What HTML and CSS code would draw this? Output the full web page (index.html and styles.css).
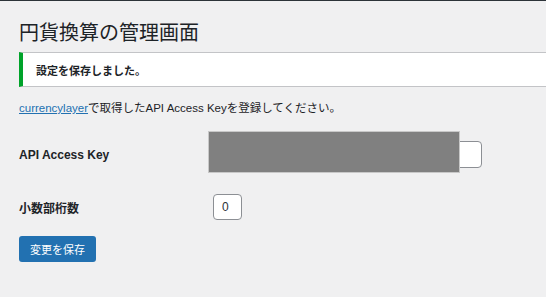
FILE: index.html
```html
<!DOCTYPE html>
<html lang="ja">
<head>
<meta charset="utf-8">
<link rel="stylesheet" href="styles.css">
</head>
<body>
<div class="topbar"></div>
<div class="wrap">
  <h1 class="title">円貨換算の管理画面</h1>
  <div class="notice"><p>設定を保存しました。</p></div>
  <p class="intro"><a href="#">currencylayer</a>で取得したAPI Access Keyを登録してください。</p>
  <form class="form">
    <div class="row row-key">
      <label class="label">API Access Key</label>
      <div class="field">
        <input class="input input-key" type="text" value="">
        <div class="redact"></div>
      </div>
    </div>
    <div class="row row-dec">
      <label class="label">小数部桁数</label>
      <div class="field">
        <input class="input input-num" type="text" value="0">
      </div>
    </div>
    <button class="btn" type="button">変更を保存</button>
  </form>
</div>
</body>
</html>
```

FILE: styles.css
```css
html, body {
  margin: 0;
  padding: 0;
  background: #f0f0f1;
  font-family: "Liberation Sans", "Noto Sans CJK JP", sans-serif;
  color: #1d2327;
}
.topbar {
  height: 1px;
  background: #2c3338;
}
.wrap {
  padding-left: 19px;
}
.title {
  margin: 17px 0 0;
  font-family: "Noto Sans CJK JP", sans-serif;
  font-weight: 400;
  font-size: 20px;
  line-height: 28px;
  color: #1d2327;
}
.notice {
  margin-top: 6px;
  height: 33px;
  background: #fff;
  border-top: 1px solid #c3c4c7;
  border-bottom: 1px solid #c3c4c7;
  border-left: 4px solid #00a32a;
  display: flex;
  align-items: center;
  padding-left: 13px;
}
.notice p {
  margin: 0;
  font-family: "Noto Sans CJK JP", sans-serif;
  font-size: 11px;
  font-weight: 700;
}
.intro {
  margin: 13px 0 0;
  font-size: 11.5px;
  line-height: 16px;
}
.intro a {
  color: #2271b1;
  text-decoration: underline;
}
.row {
  display: grid;
  grid-template-columns: 194px auto;
  align-items: center;
}
.row-key {
  margin-top: 25px;
}
.row-dec {
  margin-top: 26px;
}
.label {
  font-size: 12px;
  font-weight: 700;
}
.field {
  position: relative;
}
.input {
  box-sizing: border-box;
  border: 1px solid #8c8f94;
  border-radius: 4px;
  background: #fff;
  font-family: "Liberation Sans", sans-serif;
  font-size: 12px;
  color: #2c3338;
  padding: 0 8px;
  outline: none;
  display: block;
}
.input-key {
  width: 273px;
  height: 27px;
  margin-left: -4px;
}
.input-num {
  width: 29px;
  height: 26px;
}
.redact {
  position: absolute;
  left: -4px;
  top: -9px;
  width: 250px;
  height: 40px;
  background: #808080;
  box-shadow: 0 0 0 1px #c8c8c8;
}
.btn {
  margin-top: 16px;
  display: block;
  width: 77px;
  height: 26px;
  background: #2271b1;
  color: #fff;
  border: none;
  border-radius: 3px;
  font-family: "Noto Sans CJK JP", sans-serif;
  font-size: 11px;
  padding: 0;
}
```
